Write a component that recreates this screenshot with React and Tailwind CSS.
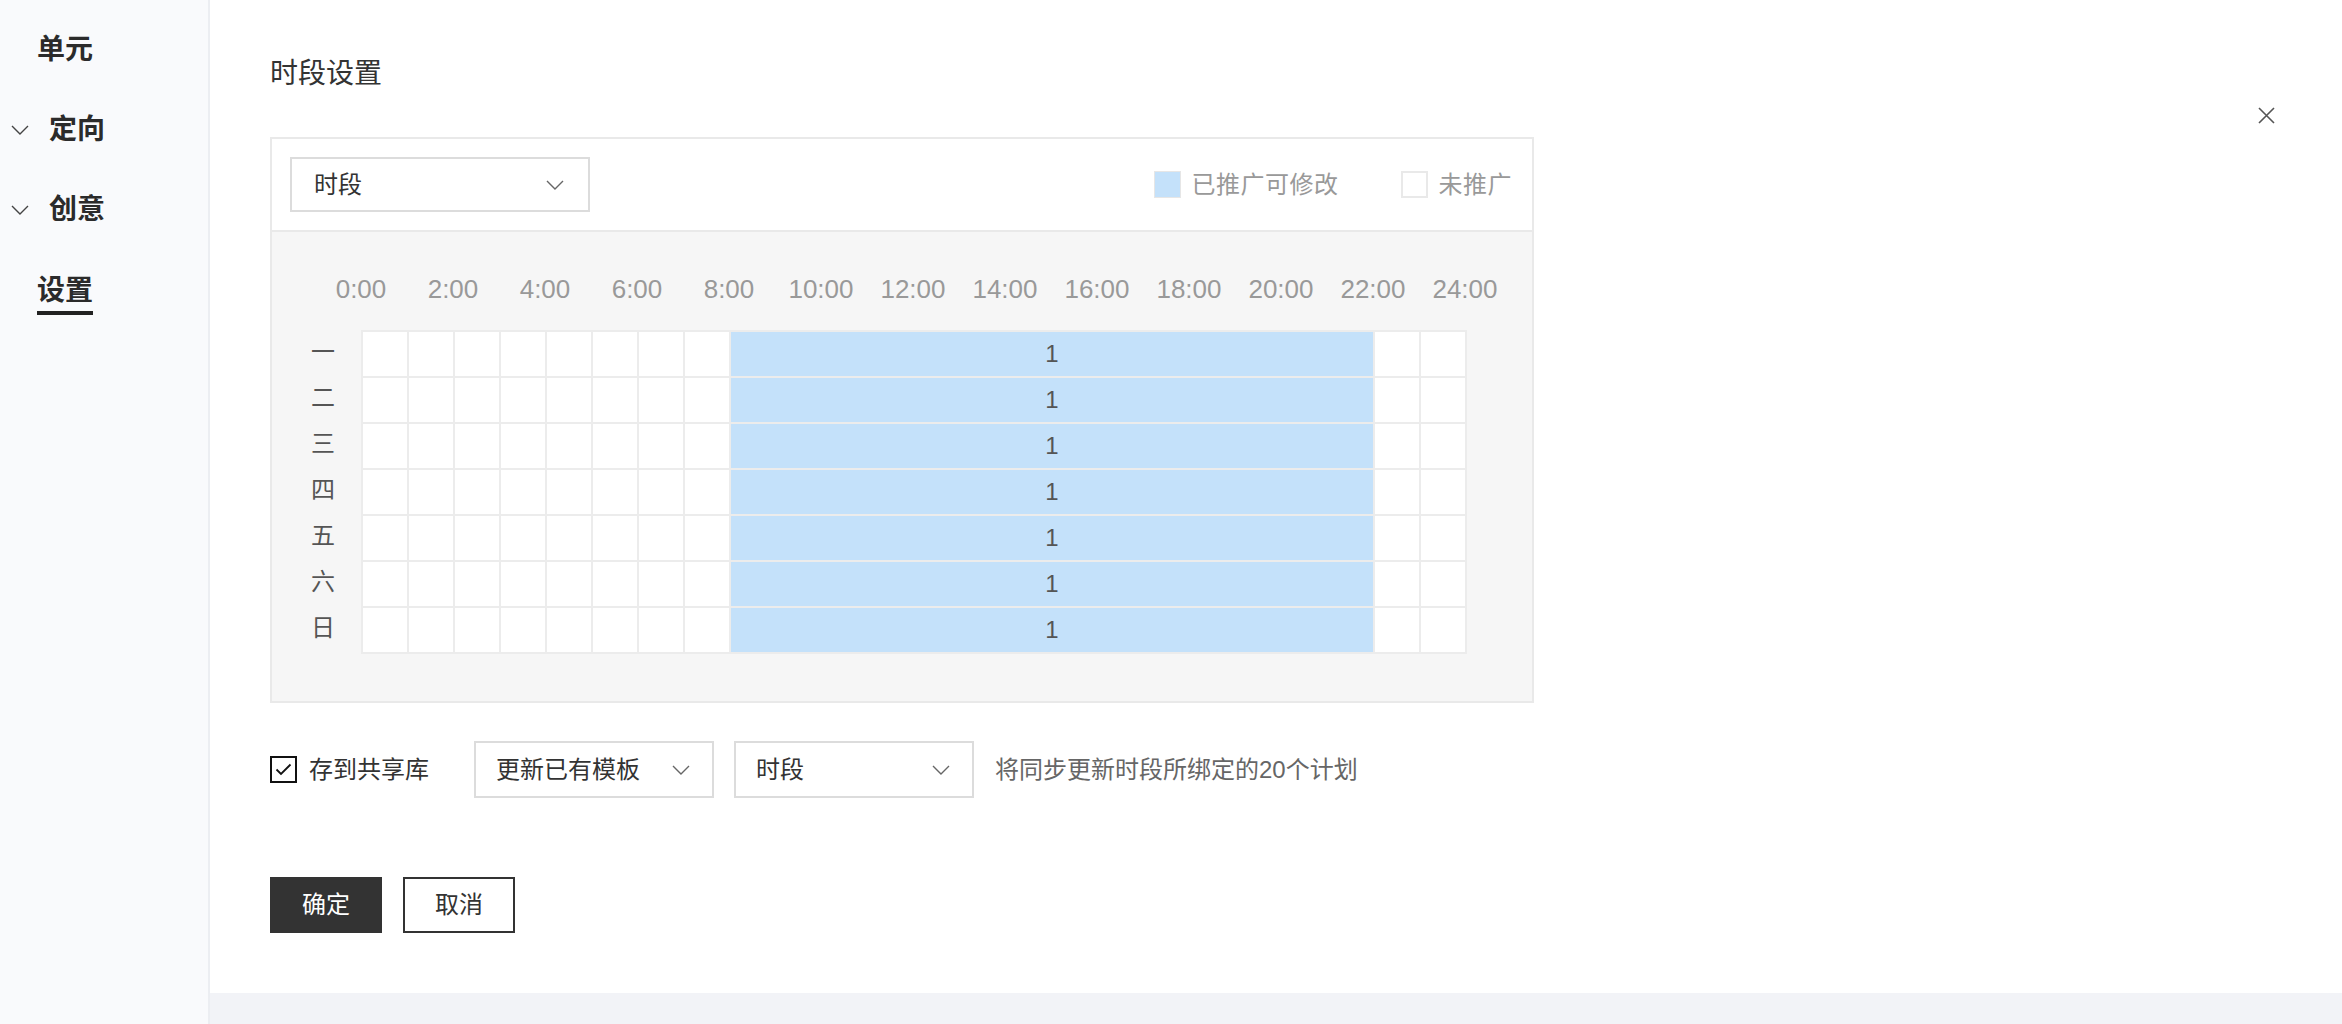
import React from "react";

const hours = ["0:00", "2:00", "4:00", "6:00", "8:00", "10:00", "12:00", "14:00", "16:00", "18:00", "20:00", "22:00", "24:00"];
const days = ["一", "二", "三", "四", "五", "六", "日"];

function Chevron({ w = 18, h = 10, color = "#666" }) {
    return (
        <svg width={w} height={h} viewBox="0 0 18 10" fill="none">
            <polyline points="1,1 9,9 17,1" stroke={color} strokeWidth="1.4" />
        </svg>
    );
}

function Select({ label, className }) {
    return (
        <div className={"flex items-center justify-between border-2 border-[#dcdcdc] bg-white text-[24px] text-[#333] " + className}>
            <span>{label}</span>
            <Chevron />
        </div>
    );
}

function SideItem({ label, chevron, active }) {
    return (
        <div className="flex items-center h-[40px]">
            {chevron ? (
                <div className="flex items-center pl-[11px] w-[49px]">
                    <Chevron w={18} h={10} color="#444" />
                </div>
            ) : (
                <div className="w-[37px]" />
            )}
            <span
                className={
                    "text-[28px] leading-[40px] font-bold text-[#2b2b2b] " +
                    (active ? "border-b-4 border-[#222] leading-[38px] mt-[6px]" : "")
                }
            >
                {label}
            </span>
        </div>
    );
}

export default function App() {
    return (
        <div className="flex w-[2342px] h-[1024px] font-['Liberation_Sans','Noto_Sans_CJK_SC',sans-serif] text-[#333]">
            {/* sidebar */}
            <div className="w-[210px] shrink-0 bg-[#f9fafc] border-r-2 border-[#eceef2] flex flex-col gap-[40px] pt-[30px]">
                <SideItem label="单元" />
                <SideItem label="定向" chevron />
                <SideItem label="创意" chevron />
                <SideItem label="设置" active />
            </div>

            {/* main */}
            <div className="flex-1 flex flex-col">
                <div className="relative h-[993px] bg-white pl-[60px] pt-[54px]">
                    <svg className="absolute right-[67px] top-[107px]" width="17" height="17" viewBox="0 0 17 17" fill="none">
                        <path d="M1 1L16 16M16 1L1 16" stroke="#555" strokeWidth="1.6" />
                    </svg>

                    <h1 className="text-[28px] leading-[40px] font-normal text-[#333]">时段设置</h1>

                    {/* panel */}
                    <div className="mt-[43px] w-[1264px] border-2 border-[#e9e9e9]">
                        <div className="h-[93px] border-b-2 border-[#e9e9e9] bg-white flex items-center justify-between pl-[18px] pr-[20px]">
                            <Select label="时段" className="w-[300px] h-[55px] pl-[22px] pr-[24px]" />
                            <div className="flex items-center text-[24px] text-[#999] tracking-[0.5px]">
                                <span className="w-[27px] h-[27px] bg-[#c4e1fa] border border-[#e6e6e6]" />
                                <span className="ml-[11px]">已推广可修改</span>
                                <span className="ml-[62px] w-[27px] h-[27px] bg-white border-2 border-[#e9e9e9]" />
                                <span className="ml-[11px]">未推广</span>
                            </div>
                        </div>

                        <div className="bg-[#f6f6f6] pt-[39px] pb-[47px]">
                            <div className="flex ml-[43px] text-[26px] leading-[36px] text-[#999]">
                                {hours.map((h) => (
                                    <div key={h} className="w-[92px] text-center">
                                        {h}
                                    </div>
                                ))}
                            </div>

                            <div className="flex mt-[23px]">
                                <div className="w-[40px] ml-[31px] mr-[18px] pt-[2px] flex flex-col text-[24px] text-[#555]">
                                    {days.map((d) => (
                                        <div key={d} className="h-[46px] flex items-center justify-center pb-[6px]">
                                            {d}
                                        </div>
                                    ))}
                                </div>
                                <div className="grid grid-cols-[repeat(24,44px)] auto-rows-[44px] gap-[2px] p-[2px] bg-[#ececec]">
                                    {days.map((d) => (
                                        <React.Fragment key={d}>
                                            {[0, 1, 2, 3, 4, 5, 6, 7].map((i) => (
                                                <div key={"a" + i} className="bg-white" />
                                            ))}
                                            <div className="col-span-14 bg-[#c4e1fa] flex items-center justify-center text-[24px] text-[#555]">
                                                1
                                            </div>
                                            <div className="bg-white" />
                                            <div className="bg-white" />
                                        </React.Fragment>
                                    ))}
                                </div>
                            </div>
                        </div>
                    </div>

                    {/* share row */}
                    <div className="flex items-center mt-[38px] text-[24px]">
                        <span className="w-[27px] h-[27px] border-2 border-[#111] flex items-center justify-center">
                            <svg width="17" height="13" viewBox="0 0 17 13" fill="none">
                                <polyline points="1.5,6.5 6,11 15.5,1.5" stroke="#111" strokeWidth="1.8" />
                            </svg>
                        </span>
                        <span className="ml-[12px] text-[#333]">存到共享库</span>
                        <Select label="更新已有模板" className="ml-[45px] w-[240px] h-[57px] pl-[20px] pr-[22px]" />
                        <Select label="时段" className="ml-[20px] w-[240px] h-[57px] pl-[20px] pr-[22px]" />
                        <span className="ml-[21px] text-[#666]">将同步更新时段所绑定的20个计划</span>
                    </div>

                    {/* buttons */}
                    <div className="flex gap-[21px] mt-[79px] text-[24px]">
                        <button className="w-[112px] h-[56px] bg-[#333] text-white">确定</button>
                        <button className="w-[112px] h-[56px] border-2 border-[#333] bg-white text-[#333]">取消</button>
                    </div>
                </div>
                <div className="flex-1 bg-[#f2f3f7]" />
            </div>
        </div>
    );
}
